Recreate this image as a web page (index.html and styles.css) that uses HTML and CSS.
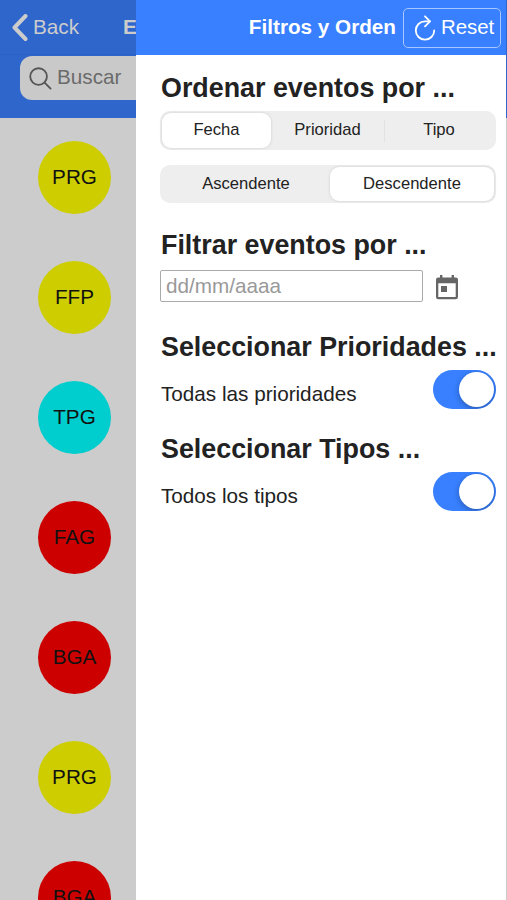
FILE: index.html
```html
<!DOCTYPE html>
<html lang="es">
<head>
  <meta charset="utf-8">
  <title>Filtros y Orden</title>
  <link rel="stylesheet" href="styles.css">
</head>
<body>
  <div class="app">

    <div class="page">
      <header class="page-header">
        <div class="toolbar">
          <svg class="back-icon" viewBox="0 0 16 27"><path d="M13.5 2 L2.5 13.5 L13.5 25"/></svg>
          <span class="back">Back</span>
          <span class="page-title">Eventos</span>
        </div>
        <div class="searchbar">
          <svg class="search-icon" viewBox="0 0 24 24"><circle cx="10" cy="10" r="8.7"/><path d="M16.3 16.3 L22.5 22.5"/></svg>
          <span>Buscar</span>
        </div>
      </header>
      <div class="events">
        <div class="event yellow">PRG</div>
        <div class="event yellow">FFP</div>
        <div class="event cyan">TPG</div>
        <div class="event red">FAG</div>
        <div class="event red">BGA</div>
        <div class="event yellow">PRG</div>
        <div class="event red">BGA</div>
      </div>
    </div>

    <div class="menu">
      <header class="menu-header">
        <span class="menu-title">Filtros y Orden</span>
        <button class="reset">
          <svg class="reset-icon" viewBox="0 0 22 26"><path d="M16 6.300 H11 A9.200 9.200 0 1 0 20.200 15.500"/><path d="M11 1.300 L16 6.300 L11 11.300"/></svg>
          <span>Reset</span>
        </button>
      </header>

      <div class="content">
        <h2>Ordenar eventos por ...</h2>
        <div class="segment three">
          <div class="option checked">Fecha</div>
          <div class="option">Prioridad</div>
          <div class="option divided">Tipo</div>
        </div>
        <div class="segment two">
          <div class="option">Ascendente</div>
          <div class="option checked">Descendente</div>
        </div>

        <h2 class="filter-heading">Filtrar eventos por ...</h2>
        <div class="date-row">
          <input class="date" type="text" placeholder="dd/mm/aaaa">
          <svg class="calendar-icon" viewBox="0 0 22 25"><path fill-rule="evenodd" d="M4 0h2.400v2.500h9.200V0H18v2.500h1.500A2.300 2.300 0 0 1 22 4.800V22a2.300 2.300 0 0 1-2.300 2.300H2.300A2.300 2.300 0 0 1 0 22V4.800A2.300 2.300 0 0 1 2.300 2.500H4zM2.300 8.300V22h17.400V8.300zM5 11h6v6H5z"/></svg>
        </div>

        <h2 class="priority-heading">Seleccionar Prioridades ...</h2>
        <div class="toggle-row">
          <span>Todas las prioridades</span>
          <div class="toggle"><div class="knob"></div></div>
        </div>

        <h2 class="type-heading">Seleccionar Tipos ...</h2>
        <div class="toggle-row">
          <span>Todos los tipos</span>
          <div class="toggle"><div class="knob"></div></div>
        </div>
      </div>
    </div>

    <div class="page-edge"></div>
  </div>
</body>
</html>
```
FILE: styles.css
```css
* {
  box-sizing: border-box;
}

body {
  margin: 0;
  font-family: "Liberation Sans", Arial, sans-serif;
  font-size: 20.7px;
  color: #222;
}

.app {
  display: grid;
  grid-template-columns: 136px 370px 1px;
  height: 900px;
  overflow: hidden;
}

/* page behind the menu */
.page {
  background-color: #ccc;
  overflow: hidden;
}

.page-header {
  height: 118px;
  background-color: #2e66cc;
  color: #ccc;
}

.toolbar {
  display: flex;
  align-items: center;
  height: 55px;
  padding-left: 12px;
  white-space: nowrap;
  border-bottom: 1px solid #2b61c4;
}

.back-icon {
  flex: none;
  width: 16px;
  height: 27px;
  fill: none;
  stroke: #ccc;
  stroke-width: 4;
  stroke-linecap: round;
  stroke-linejoin: round;
}

.back {
  width: 91px;
  padding-left: 5px;
  flex: none;
}

.page-title {
  padding-left: 4px;
  font-weight: bold;
}

.searchbar {
  display: flex;
  align-items: center;
  gap: 5px;
  width: 200px;
  height: 44px;
  margin: 1px 0 0 20px;
  padding-left: 9px;
  border-radius: 12px;
  background-color: #c9c9c9;
  color: #6b6b6b;
}

.searchbar span {
  padding-bottom: 2px;
}

.search-icon {
  width: 23px;
  height: 23px;
  fill: none;
  stroke: #555;
  stroke-width: 1.9;
  stroke-linecap: round;
}

.events {
  display: flex;
  flex-direction: column;
  gap: 47px;
  padding: 23px 0 0 38px;
}

.event {
  flex: none;
  width: 73px;
  height: 73px;
  line-height: 72px;
  border-radius: 50%;
  text-align: center;
  color: #111;
}

.yellow {
  background-color: #cdcd00;
}

.cyan {
  background-color: #00cdcd;
}

.red {
  background-color: #cd0000;
}

/* side menu */
.menu {
  background-color: #fff;
}

.menu-header {
  display: flex;
  justify-content: flex-end;
  align-items: center;
  height: 55px;
  padding-right: 5px;
  background-color: #3880ff;
  color: #fff;
}

.menu-title {
  margin-right: 7px;
  padding-bottom: 1px;
  font-weight: bold;
}

.reset {
  display: flex;
  align-items: center;
  gap: 5px;
  width: 98px;
  height: 40px;
  padding: 0 0 0 10px;
  border: 1px solid #a5c6ff;
  border-radius: 5px;
  background: none;
  color: #fff;
  font: inherit;
  font-size: 20.4px;
}

.reset-icon {
  flex: none;
  width: 22px;
  height: 26px;
  fill: none;
  stroke: #fff;
  stroke-width: 1.8;
  stroke-linecap: round;
  stroke-linejoin: round;
}

.content {
  padding: 17px 10px 0 24px;
}

h2 {
  margin: 0 0 0 1px;
  font-size: 26.85px;
  line-height: 32px;
  white-space: nowrap;
}

.segment {
  display: grid;
  height: 39px;
  padding: 2px;
  border-radius: 10px;
  background-color: #eee;
  font-size: 16.6px;
}

.three {
  grid-template-columns: 109px 113px 1fr;
  margin-top: 7px;
}

.three .option {
  padding-bottom: 2px;
}

.two {
  grid-template-columns: 168px 1fr;
  height: 38px;
  margin-top: 15px;
}

.option {
  display: flex;
  align-items: center;
  justify-content: center;
}

.checked {
  border-radius: 9px;
  background-color: #fff;
  box-shadow: 0 0 2px 1px #ddd;
}

.divided {
  background: linear-gradient(#e2e2e2, #e2e2e2) left center / 1px 22px no-repeat;
}

.filter-heading {
  margin-top: 26px;
}

.date-row {
  display: flex;
  align-items: center;
  height: 32px;
  margin-top: 9px;
}

.date {
  width: 263px;
  height: 32px;
  padding: 0 5px;
  border: 1px solid #aaa;
  border-radius: 2px;
  font: inherit;
}

.date::placeholder {
  color: #999;
}

.calendar-icon {
  width: 22px;
  height: 25px;
  margin: 2px 0 0 13px;
  fill: #666;
}

.priority-heading {
  margin-top: 29px;
}

.toggle-row {
  display: flex;
  align-items: center;
  justify-content: space-between;
  height: 39px;
  margin-top: 7px;
  padding-left: 1px;
}

.toggle-row span {
  padding-top: 9px;
}

.toggle {
  display: flex;
  align-items: center;
  justify-content: flex-end;
  width: 63px;
  height: 39px;
  padding-right: 2px;
  border-radius: 20px;
  background-color: #3880ff;
  overflow: hidden;
}

.knob {
  width: 35px;
  height: 35px;
  border-radius: 50%;
  background-color: #fff;
  box-shadow: 0 2px 6px rgba(0, 0, 0, 0.3);
}

.type-heading {
  margin-top: 24px;
}

.page-edge {
  background: linear-gradient(#2e66cc 118px, #ccc 118px);
}
```
